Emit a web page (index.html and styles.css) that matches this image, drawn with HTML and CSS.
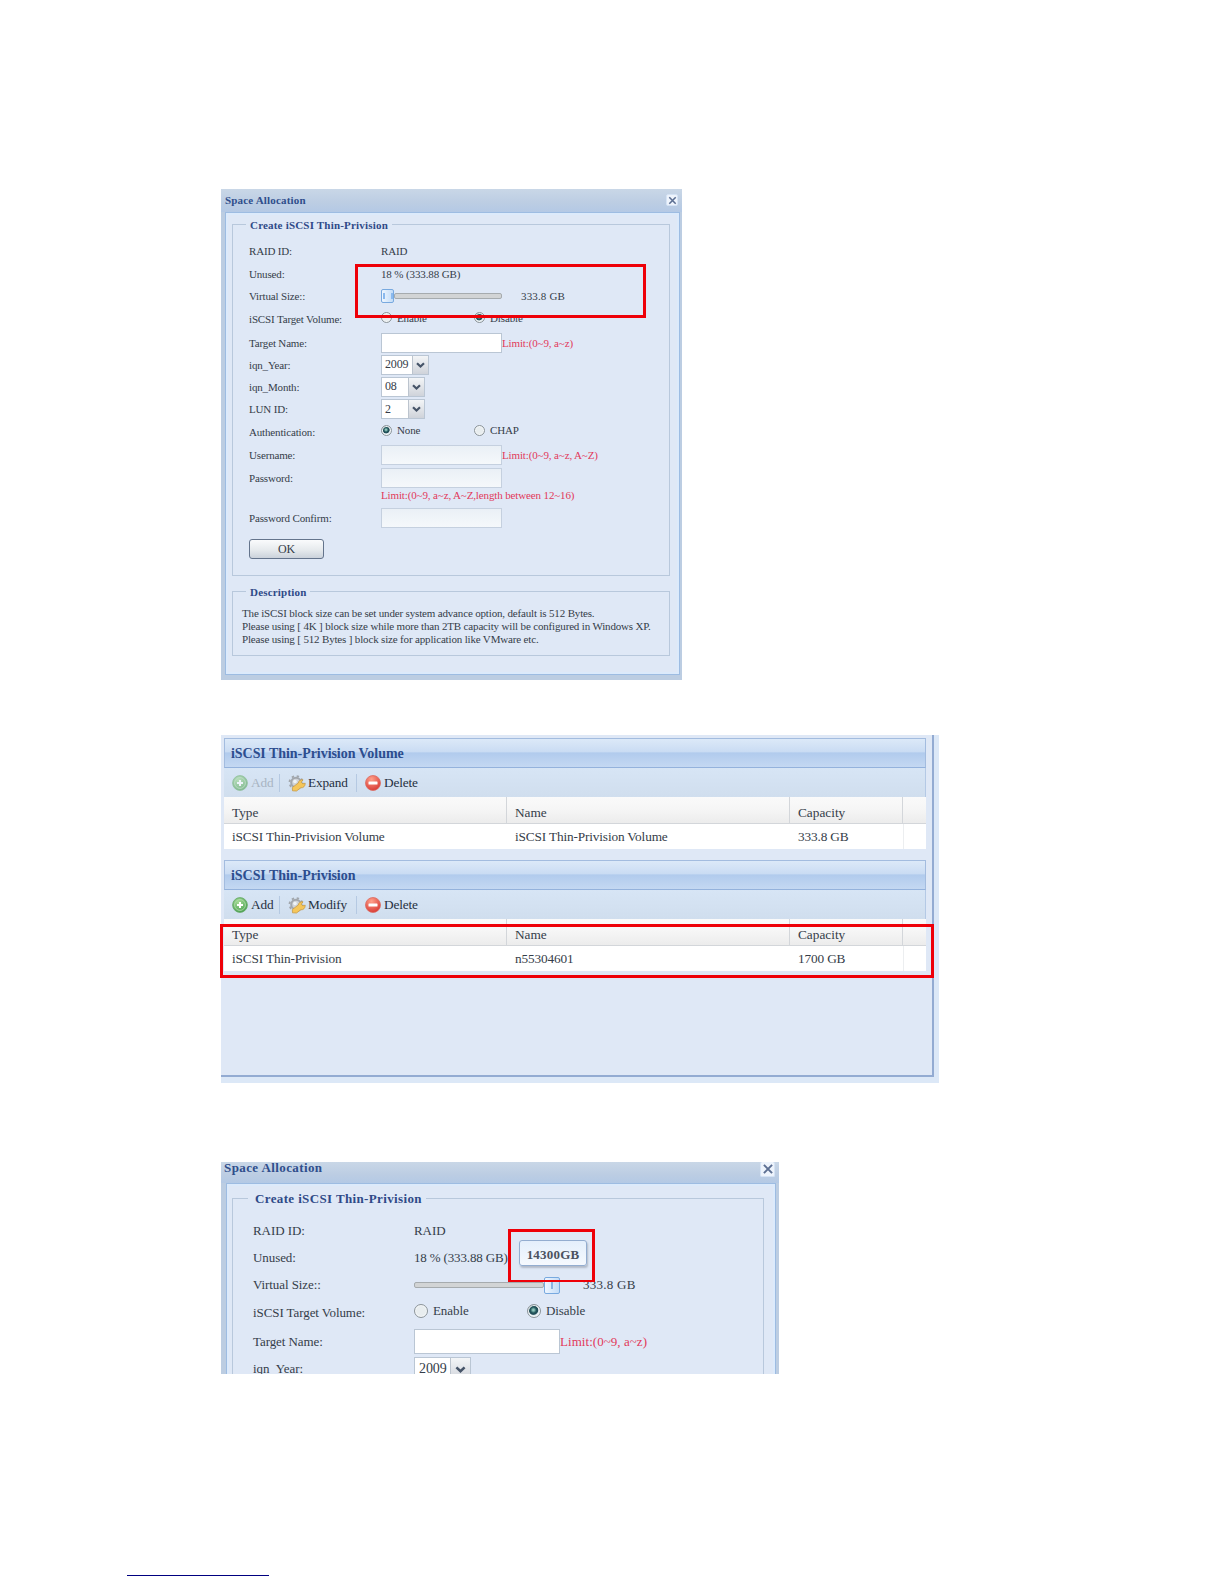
FILE: index.html
```
<!DOCTYPE html>
<html lang="en">
<head>
<meta charset="utf-8">
<title>iSCSI Thin-Provisioning</title>
<link rel="stylesheet" href="styles.css">
</head>
<body>
<svg width="0" height="0" class="defs">
  <defs>
    <radialGradient id="green" cx=".4" cy=".3" r=".8"><stop offset="0" stop-color="#a5dc96"/><stop offset="1" stop-color="#3f994a"/></radialGradient>
    <radialGradient id="red" cx=".4" cy=".25" r=".8"><stop offset="0" stop-color="#ffa08a"/><stop offset="1" stop-color="#d73631"/></radialGradient>
    <symbol id="i-add" viewBox="0 0 16 16"><circle cx="8" cy="8" r="7.4" fill="url(#green)" stroke="#66a966" stroke-width=".8"/><circle cx="8" cy="8" r="5.4" fill="none" stroke="#b8deb0" stroke-width=".8"/><path d="M8 5v6M5 8h6" stroke="#fff" stroke-width="2"/></symbol>
    <symbol id="i-del" viewBox="0 0 16 16"><circle cx="8" cy="8" r="7.5" fill="url(#red)" stroke="#db6c62" stroke-width=".8"/><rect x="3.5" y="6.5" width="9" height="3" rx=".6" fill="#fff"/></symbol>
    <symbol id="i-gear" viewBox="0 0 18 17"><circle cx="8" cy="7.500" r="4.800" fill="#d0d4d9" stroke="#a2a7ad" stroke-width="2"/><circle cx="8" cy="7.500" r="6.500" fill="none" stroke="#a2a7ad" stroke-width="1.800" stroke-dasharray="2.400 2.700"/><circle cx="7" cy="6.500" r="1.800" fill="#eef3f8"/><path d="M4.500 15.800 4.300 12.500l6-4.500c.2-2 2.200-3.700 4.700-3.200l-1.700 2.500 1.500 1.500 2.400-.6c.2 2.900-1.900 4.900-4.400 4.600L8.500 16z" fill="#f5c65a" stroke="#c59a48" stroke-width=".8"/></symbol>
    <symbol id="i-x" viewBox="0 0 12 12"><path d="M2.500 2.500l7 7M9.500 2.500l-7 7" stroke="#5c6f92" stroke-width="1.700"/></symbol>
  </defs>
</svg>

<main class="page">
  <section class="dialog small">
    <header class="title"><b>Space Allocation</b><span class="close"><svg><use href="#i-x"/></svg></span></header>
    <div class="body">
      <div class="group form">
        <b class="legend">Create iSCSI Thin-Privision</b>
        <div class="rows">
          <label>RAID ID:</label><div>RAID</div>
          <label>Unused:</label><div class="val">18 % (333.88 GB)</div>
          <label>Virtual Size::</label><div><span class="slider"><i class="thumb grip"></i><i class="track"></i></span><span class="size">333.8 GB</span></div>
          <label>iSCSI Target Volume:</label><div class="radios"><span><i class="radio"></i>Enable</span><span><i class="radio on"></i>Disable</span></div>
          <label>Target Name:</label><div><i class="input"></i><em>Limit:(0~9, a~z)</em></div>
          <label>iqn_Year:</label><div><span class="select year">2009<i><svg viewBox="0 0 9 6"><path d="M1 1.200 4.500 4.500 8 1.200"/></svg></i></span></div>
          <label>iqn_Month:</label><div><span class="select">08<i><svg viewBox="0 0 9 6"><path d="M1 1.200 4.500 4.500 8 1.200"/></svg></i></span></div>
          <label>LUN ID:</label><div><span class="select">2<i><svg viewBox="0 0 9 6"><path d="M1 1.200 4.500 4.500 8 1.200"/></svg></i></span></div>
          <label>Authentication:</label><div class="radios"><span><i class="radio on"></i>None</span><span><i class="radio"></i>CHAP</span></div>
          <label>Username:</label><div><i class="input off"></i><em>Limit:(0~9, a~z, A~Z)</em></div>
          <label>Password:</label><div><i class="input off"></i></div>
          <label></label><div class="hint"><em>Limit:(0~9, a~z, A~Z,length between 12~16)</em></div>
          <label>Password Confirm:</label><div><i class="input off"></i></div>
        </div>
        <div class="ok">OK</div>
      </div>
      <div class="group desc">
        <b class="legend">Description</b>
        <p class="l1">The iSCSI block size can be set under system advance option, default is 512 Bytes.</p>
        <p class="l2">Please using [ 4K ] block size while more than 2TB capacity will be configured in Windows XP.</p>
        <p class="l3">Please using [ 512 Bytes ] block size for application like VMware etc.</p>
      </div>
    </div>
    <div class="mark m1"></div>
  </section>

  <section class="volumes">
    <div class="inner">
      <div class="grid">
        <header><b>iSCSI Thin-Privision Volume</b></header>
        <div class="tools"><span class="dis"><svg><use href="#i-add"/></svg>Add</span><span class="gear"><svg><use href="#i-gear"/></svg>Expand</span><span><svg><use href="#i-del"/></svg>Delete</span></div>
        <div class="row head"><span>Type</span><span>Name</span><span>Capacity</span><span></span></div>
        <div class="row"><span>iSCSI Thin-Privision Volume</span><span>iSCSI Thin-Privision Volume</span><span>333.8 GB</span><span></span></div>
      </div>
      <div class="grid">
        <header><b>iSCSI Thin-Privision</b></header>
        <div class="tools"><span><svg><use href="#i-add"/></svg>Add</span><span class="gear"><svg><use href="#i-gear"/></svg>Modify</span><span><svg><use href="#i-del"/></svg>Delete</span></div>
        <div class="row head"><span>Type</span><span>Name</span><span>Capacity</span><span></span></div>
        <div class="row"><span>iSCSI Thin-Privision</span><span>n55304601</span><span>1700 GB</span><span></span></div>
      </div>
    </div>
    <div class="mark m2"></div>
  </section>

  <section class="dialog large">
    <header class="title"><b>Space Allocation</b><span class="close"><svg><use href="#i-x"/></svg></span></header>
    <div class="body">
      <div class="group form">
        <b class="legend">Create iSCSI Thin-Privision</b>
        <div class="rows">
          <label>RAID ID:</label><div>RAID</div>
          <label>Unused:</label><div class="val">18 % (333.88 GB)</div>
          <label>Virtual Size::</label><div><span class="slider"><i class="track"></i><i class="thumb"></i></span><span class="size">333.8 GB</span></div>
          <label>iSCSI Target Volume:</label><div class="radios"><span><i class="radio"></i>Enable</span><span><i class="radio on"></i>Disable</span></div>
          <label>Target Name:</label><div><i class="input"></i><em>Limit:(0~9, a~z)</em></div>
          <label>iqn_Year:</label><div><span class="select year">2009<i><svg viewBox="0 0 9 6"><path d="M1 1.200 4.500 4.500 8 1.200"/></svg></i></span></div>
        </div>
      </div>
    </div>
    <div class="tip">14300GB</div>
    <div class="mark m3"></div>
  </section>
  <footer class="rule"></footer>
</main>
</body>
</html>
```
FILE: styles.css
```
* { box-sizing: border-box; }
body { margin: 0; background: #fff; font-family: "Liberation Serif", "Times New Roman", serif; color: #353d49; }
.defs { position: absolute; }
.page { height: 1584px; padding: 189px 0 0 221px; display: flex; flex-direction: column; overflow: hidden; }
i, em { font-style: normal; }
p { margin: 0; }

.dialog { position: relative; flex: none; background: #bccde2; }
.title { display: flex; justify-content: space-between; align-items: center; color: #2f4e8c; background: linear-gradient(#c9d7e7, #bccde3 60%, #b4c9e5); }
.close { display: flex; align-items: center; justify-content: center; background: #eef4fc; border-radius: 2px; border: 1px solid #d5e3f5; }
.body { border: 1px solid #9dbce2; background: #dfe8f6; box-shadow: inset 0 0 0 2px #dceafb; }
.group { border: 1px solid #b8c8dc; position: relative; display: flex; flex-direction: column; align-items: flex-start; }
.legend { background: #dfe8f6; color: #2f4a88; white-space: nowrap; }
.rows { display: grid; }
.rows > * { display: flex; align-items: center; white-space: nowrap; }
em { color: #e2395a; }
.slider { display: flex; align-items: center; }
.track { flex: 1; height: 6px; border: 1px solid #a6abae; border-radius: 2px; background: #d2d4d5; }
.thumb { border: 1px solid #78a9df; border-radius: 2px; background: linear-gradient(90deg, #eef6ff, #c3dcf7); display: flex; align-items: center; justify-content: center; }
.thumb::after { content: ""; width: 2px; height: 7px; background: #8ab4e3; }
.thumb.grip::after { width: 6px; height: 6px; border: solid #8ab9ee; border-width: 0 2px; background: none; }
.radios > span { display: flex; align-items: center; }
.radio { border: 1px solid #8b9499; border-radius: 50%; background: #e8edef; box-shadow: inset 0 0 0 1px #f5f7f8; }
.radio.on { background: radial-gradient(circle at 45% 42%, #90c7bd 0 8%, #23585c 30%, #204a55 45%, #dbe8ec 55%); }
.input { background: #fff; border: 1px solid #bac6d4; }
.input.off { background: linear-gradient(#eaf0f6, #f5f8fb); border-color: #c5d0df; }
.select { display: flex; justify-content: space-between; align-items: center; background: #fff; border: 1px solid #bac6d4; }
.select i { display: flex; align-items: center; justify-content: center; align-self: stretch; border-left: 1px solid #bcc4ce; background: linear-gradient(#f3f5f7, #cfd3da); }
.select path { fill: none; stroke: #465468; stroke-width: 2.200; }

.small { width: 461px; height: 491px; padding: 0 2px 5px 4px; font-size: 11px; letter-spacing: -.13px; }
.small .title { height: 23px; padding: 0 3px 1px 4px; margin: 0 -2px 0 -4px; letter-spacing: .18px; }
.small .close { width: 12px; height: 12px; margin-right: 1px; }
.small .close svg { width: 11px; height: 11px; flex: none; }
.small .body { height: 463px; padding: 11px 9px 0 6px; }
.small .legend { margin: -6px 0 0 13px; padding: 0 4px; height: 13px; line-height: 13px; letter-spacing: .19px; }
.small .form { height: 352px; padding-left: 0; }
.small .rows { margin: 8px 0 0 16px; grid-template-columns: 132px 290px; grid-template-rows: 22px 23px 22px 24px 23px 21px 23px 22px 23px 23px 23px 15px 28px; }
.small .hint { padding-bottom: 4px; }
.small label { letter-spacing: -.16px; }
.small .slider { width: 121px; }
.small .thumb { width: 13px; height: 14px; }
.small .size { margin-left: 19px; letter-spacing: .15px; }
.small .radios { padding-bottom: 3px; }
.small .radios > span { width: 93px; gap: 5px; }
.small .radio { width: 11px; height: 11px; }
.small .input { width: 121px; height: 20px; }
.small .select { width: 44px; height: 20px; padding-left: 3px; font-size: 12px; }
.small .select.year { width: 48px; }
.small .select i { width: 16px; }
.small .select svg { width: 9px; height: 6px; }
.ok { margin: 7px 0 0 16px; width: 75px; height: 20px; border: 1px solid #64748c; border-radius: 3px; background: linear-gradient(#fafbfc, #e6eaed 55%, #cbd2db); text-align: center; line-height: 19px; font-size: 12px; }
.desc { height: 65px; margin-top: 15px; }
.desc p { margin-left: 9px; line-height: 13px; white-space: nowrap; letter-spacing: -.165px; }
.desc .l1 { margin-top: 8px; }

.mark { position: absolute; border: 3px solid #ee0008; }
.m1 { left: 134px; top: 75px; width: 291px; height: 54px; }
.m2 { left: -1px; top: 189px; width: 714px; height: 54px; }
.m3 { left: 287px; top: 67px; width: 87px; height: 53px; border-bottom-width: 2px; }

.volumes { position: relative; flex: none; margin-top: 55px; width: 718px; height: 348px; background: #dce8f7; padding: 0 5px 6px 0; }
.inner { height: 342px; border: solid #93abd2; border-width: 0 2px 2px 0; background: #dfe8f6; padding: 3px 6px 0 3px; display: flex; flex-direction: column; gap: 11px; font-size: 13.300px; letter-spacing: -.15px; }
.grid { width: 702px; height: 111px; }
.grid header { height: 30px; border: 1px solid #a3bcdf; border-bottom-color: #94b2dc; background: linear-gradient(#dce9f8, #cadcf3 45%, #b1cbed 50%, #c4d8f2); color: #2c4d8e; line-height: 30px; padding-left: 6px; font-size: 14px; letter-spacing: -.05px; }
.tools { height: 29px; display: flex; align-items: center; padding: 1px 0 0 8px; background: linear-gradient(#d7e5f5, #d0deee); border-right: 1px solid #b4c9e5; }
.tools span { display: flex; align-items: center; gap: 3px; height: 18px; margin-right: 8px; border-right: 1px solid #b5c9e2; color: #26303f; }
.tools span:last-child { border: 0; }
.tools span:first-child { width: 48px; }
.tools .gear { width: 69px; gap: 2px; }
.tools svg { width: 16px; height: 16px; flex: none; }
.tools .gear svg { width: 18px; height: 17px; }
.tools .dis { color: #a8b4c2; }
.tools .dis svg { opacity: .6; }
.row { display: grid; grid-template-columns: 283px 283px 113px 23px; height: 25px; background: #fff; }
.row span { padding-left: 8px; line-height: 25px; white-space: nowrap; }
.row.head { height: 27px; background: linear-gradient(#fafafa, #f6f6f6 45%, #ececec); border-bottom: 1px solid #d3d6da; }
.head span { height: 26px; border-right: 1px solid #d3d6da; padding-top: 3px; line-height: 25px; letter-spacing: 0; }
.head span:last-child { border: 0; }
.row:not(.head) span:last-child { border-left: 1px solid #eceef0; }

.large { width: 558px; height: 212px; margin-top: 79px; overflow: hidden; padding: 0 3px 0 5px; font-size: 13px; letter-spacing: -.08px; }
.large .title { height: 21px; margin: 0 -3px 0 -5px; padding: 0 4px 0 3px; }
.large .title b { margin-top: -9px; letter-spacing: .4px; }
.large .close { width: 15px; height: 15px; margin-top: -7px; border-top: 0; }
.large .close svg { width: 14px; height: 14px; flex: none; }
.large .body { height: 230px; padding: 14px 11px 0 5px; }
.large .group { height: 210px; }
.large .legend { margin: -8px 0 0 15px; padding: 0 4px 0 7px; height: 15px; line-height: 15px; letter-spacing: .37px; }
.large .rows { margin: 11px 0 0 20px; grid-template-columns: 161px 330px; grid-template-rows: 27px 27px 28px 28px 29px 26px; }
.large label { letter-spacing: -.08px; }
.large .val { letter-spacing: -.15px; }
.large .slider { width: 146px; }
.large .thumb { width: 16px; height: 17px; }
.large .thumb::after { height: 8px; }
.large .size { margin-left: 23px; letter-spacing: .25px; }
.large .radios { padding-bottom: 4px; }
.large .radios > span { width: 113px; gap: 5px; }
.large .radio { width: 14px; height: 14px; }
.large .input { width: 146px; height: 25px; }
.large em { letter-spacing: .05px; }
.large .select { width: 57px; height: 25px; padding-left: 4px; font-size: 14px; }
.large .select i { width: 20px; }
.large .select svg { width: 11px; height: 7px; }
.tip { position: absolute; left: 298px; top: 78px; width: 68px; height: 26px; border: 1px solid #93add0; border-radius: 3px; background: linear-gradient(#e4effc, #f5f9fe); box-shadow: 1px 2px 2px #b1bac8; text-align: center; line-height: 28px; font-size: 13px; letter-spacing: .2px; font-weight: bold; color: #4b5260; }
.rule { flex: none; width: 142px; height: 1px; margin: 201px 0 0 -94px; background: #000080; }
```
